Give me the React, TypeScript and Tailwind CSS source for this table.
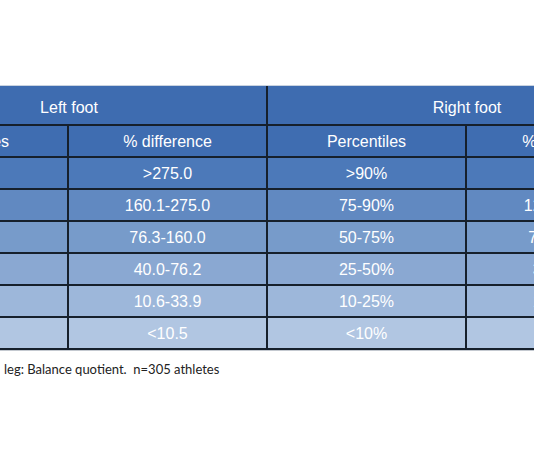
const columns = ["w-[197px]", "w-[199px]", "w-[199px]", "w-[199px]"];

type Row = { bg: string; cells: string[] };

const rows: Row[] = [
  { bg: "bg-[#4c79b9]", cells: [">90%", ">275.0", ">90%", ">245.0"] },
  { bg: "bg-[#6189c1]", cells: ["75-90%", "160.1-275.0", "75-90%", "121.1-245.0"] },
  { bg: "bg-[#779bca]", cells: ["50-75%", "76.3-160.0", "50-75%", "71.1-121.0"] },
  { bg: "bg-[#8aa8d2]", cells: ["25-50%", "40.0-76.2", "25-50%", "34.0-71.0"] },
  { bg: "bg-[#9db7da]", cells: ["10-25%", "10.6-33.9", "10-25%", "10.1-33.9"] },
  { bg: "bg-[#b1c6e2]", cells: ["<10%", "<10.5", "<10%", "<10.0"] },
];

export default function App() {
  return (
    <main className="h-[462px] w-[534px] overflow-hidden bg-white">
      <div className="ml-[-128px] mt-[85px] w-[794px] font-['Liberation_Sans',Arial,sans-serif] text-[16px] text-white">
        <div className="flex h-[39px] border-t border-[#c9d3e0] bg-[#3e6cb0]">
          <div className="flex w-[396px] items-center justify-center border-r-2 border-[#16202c] pt-[5px]">Left foot</div>
          <div className="flex w-[398px] items-center justify-center pt-[5px]">Right foot</div>
        </div>
        <div className="flex h-[32px] border-t-2 border-[#16202c] bg-[#3f6db1]">
          {["Percentiles", "% difference", "Percentiles", "% difference"].map((label, i) => (
            <div
              key={i}
              className={`flex items-center justify-center pt-[1px] ${columns[i]} ${i < 3 ? "border-r-2 border-[#16202c]" : ""}`}
            >
              {label}
            </div>
          ))}
        </div>
        {rows.map((row, r) => (
          <div key={r} className={`flex h-[32px] border-t-2 border-[#16202c] ${row.bg}`}>
            {row.cells.map((cell, i) => (
              <div
                key={i}
                className={`flex items-center justify-center pt-[1px] ${columns[i]} ${i < 3 ? "border-r-2 border-[#16202c]" : ""}`}
              >
                {cell}
              </div>
            ))}
          </div>
        ))}
        <div className="h-[2px] bg-[#16202c]" />
        <div className="h-[1px] bg-[#c4c9d0]" />
      </div>
      <p className="mt-[9px] pl-[4px] font-['Lato',sans-serif] text-[13px] text-[#222]">
        leg: Balance quotient.&nbsp; n=305 athletes
      </p>
    </main>
  );
}
